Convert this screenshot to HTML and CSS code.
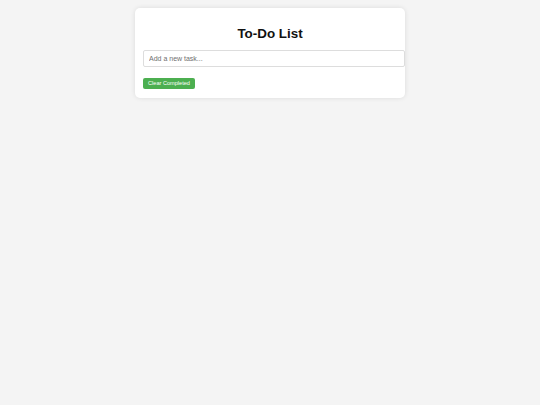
FILE: index.html
```html
<!DOCTYPE html>
<html lang="en">
<head>
<meta charset="utf-8">
<title>To-Do List</title>
<link rel="stylesheet" href="styles.css">
</head>
<body>
<div class="container">
  <h1 class="title">To-Do List</h1>
  <input class="task-input" type="text" placeholder="Add a new task...">
  <ul class="task-list"></ul>
  <button class="clear-btn" type="button">Clear Completed</button>
</div>
</body>
</html>
```

FILE: styles.css
```css
html, body {
  margin: 0;
  padding: 0;
}
body {
  background: #f4f4f4;
  font-family: "Liberation Sans", Arial, sans-serif;
  min-height: 405px;
}
.container {
  box-sizing: border-box;
  width: 270px;
  margin: 8px auto 0;
  padding: 8px 8px 9px;
  background: #fff;
  border-radius: 5px;
  box-shadow: 0 0 5px rgba(0, 0, 0, 0.1);
}
.title {
  margin: 10px 0 9px;
  font-size: 13.4px;
  line-height: 15px;
  font-weight: bold;
  text-align: center;
  color: #111;
}
.task-input {
  display: block;
  box-sizing: border-box;
  width: 262px;
  height: 17px;
  margin: 0;
  padding: 0 5px;
  border: 1px solid #ddd;
  border-radius: 2px;
  font-family: "Liberation Sans", Arial, sans-serif;
  font-size: 7px;
  color: #333;
  outline: none;
}
.task-input::placeholder {
  color: #6f6f6f;
}
.task-list {
  list-style: none;
  margin: 0;
  padding: 0;
  height: 11px;
}
.clear-btn {
  display: block;
  margin: 0;
  padding: 0 5px;
  height: 10.5px;
  border: none;
  border-radius: 2px;
  background: #4caf50;
  color: #fff;
  font-family: "Liberation Sans", Arial, sans-serif;
  font-size: 5.6px;
  line-height: 10.5px;
  cursor: pointer;
}
```
